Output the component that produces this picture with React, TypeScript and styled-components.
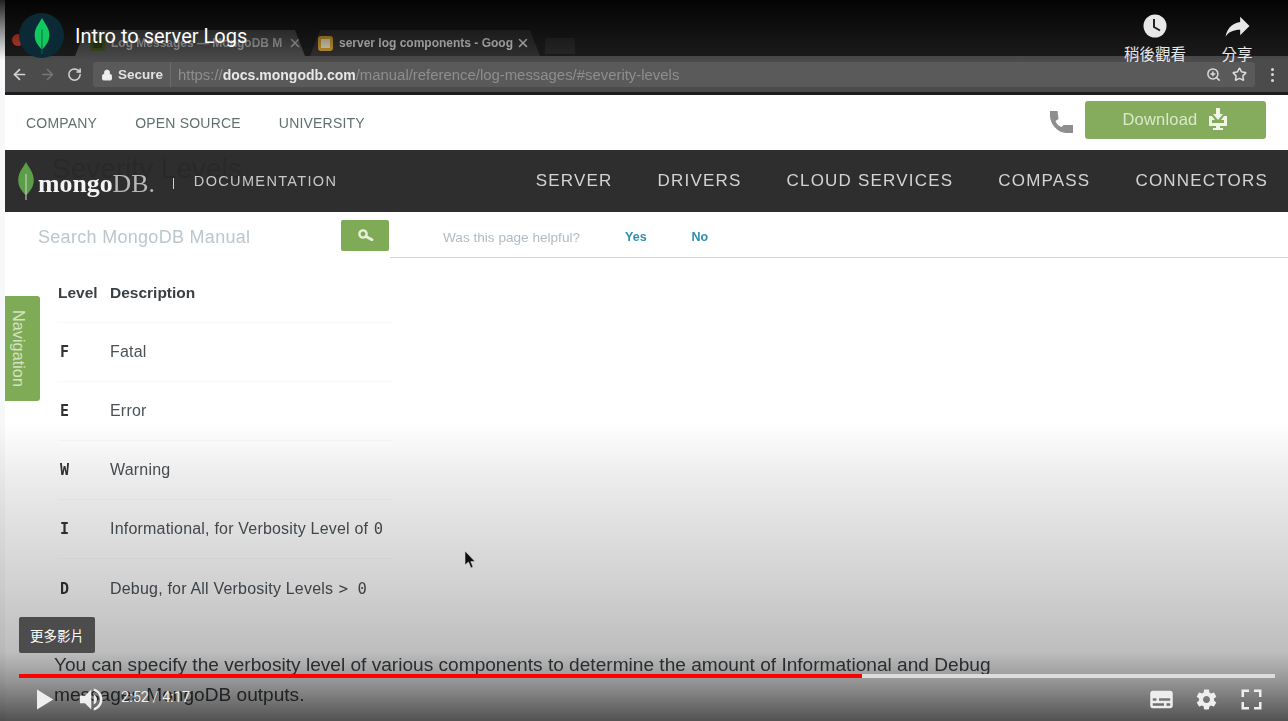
import React from 'react';
import styled, { createGlobalStyle } from 'styled-components';
import { ArrowLeft, ArrowRight, RotateCw, Lock, X, ZoomIn, Star } from 'lucide-react';

const Global = createGlobalStyle`
  html, body { margin: 0; padding: 0; background: #f6f8fa; }
  body { width: 1288px; height: 721px; overflow: hidden; font-family: "Liberation Sans", Arial, sans-serif; }
`;

const Page = styled.div`
  position: relative;
  width: 1288px;
  height: 721px;
  overflow: hidden;
  padding-left: 5px;
  box-sizing: border-box;
  background: #f6f8fa;
`;
const Video = styled.div`
  width: 1283px;
  height: 721px;
  background: #fff;
  display: flex;
  flex-direction: column;
  filter: blur(0.5px);
  overflow: hidden;
`;
const TabStrip = styled.div`
  height: 56px;
  box-sizing: border-box;
  background: #1c1c1d;
  display: flex;
  align-items: flex-end;
  padding-left: 70px;
  gap: 5px;
  position: relative;
`;
const Traffic = styled.span`
  position: absolute;
  left: 7px;
  top: 34px;
  width: 12px;
  height: 12px;
  border-radius: 50%;
  background: #c8402f;
`;
const Tab = styled.div<{ $active?: boolean }>`
  width: 230px;
  height: 26px;
  box-sizing: border-box;
  display: flex;
  align-items: center;
  gap: 6px;
  padding: 0 ${p => (p.$active ? 3 : 10)}px 0 ${p => (p.$active ? 15 : 8)}px;
  background: ${p => (p.$active ? '#4a4a4a' : '#303031')};
  color: ${p => (p.$active ? '#a0a0a0' : '#c8c8c8')};
  font-size: 12px;
  font-weight: 700;
  white-space: nowrap;
  clip-path: polygon(0 100%, 10px 0, calc(100% - 10px) 0, 100% 100%);
`;
const TabTitle = styled.span`
  flex: 1;
  margin-right: -6px;
`;
const Favicon = styled.span<{ $edge: string; $fill: string }>`
  width: 15px;
  height: 15px;
  border-radius: 3px;
  border: 3px solid ${p => p.$edge};
  background: ${p => p.$fill};
  box-sizing: border-box;
  flex: none;
`;
const NewTab = styled.div`
  width: 30px;
  height: 16px;
  background: #28282a;
  align-self: flex-end;
  margin-bottom: 2px;
`;
const AddressRow = styled.div`
  height: 35px;
  background: #4b4b4c;
  border-bottom: 3px solid #1d1d1f;
  display: flex;
  align-items: center;
  padding: 3px 0 0 6px;
  box-sizing: content-box;
  margin-top: -2px;
  color: #d4d4d4;
`;
const NavIcons = styled.div`
  display: flex;
  align-items: center;
  gap: 11px;
  width: 82px;
  flex: none;
`;
const Omnibox = styled.div`
  width: 1162px;
  height: 25px;
  box-sizing: border-box;
  background: #5a5a5b;
  border-radius: 3px;
  display: flex;
  align-items: center;
  padding: 0 8px;
  font-size: 14.9px;
  white-space: nowrap;
`;
const Secure = styled.span`
  display: flex;
  align-items: center;
  gap: 5px;
  padding-right: 7px;
  border-right: 1px solid #6a6a6a;
  margin-right: 7px;
  height: 100%;
  color: #e2e2e2;
  font-size: 13.5px;
  font-weight: 700;
`;
const UrlPart = styled.span<{ $bright?: boolean }>`
  color: ${p => (p.$bright ? '#e8e8e8' : '#8e8e8e')};
  font-weight: ${p => (p.$bright ? 700 : 400)};
  font-size: ${p => (p.$bright ? '14px' : 'inherit')};
`;
const OmniTools = styled.div`
  margin-left: auto;
  display: flex;
  gap: 11px;
  color: #dcdcdc;
`;
const MenuDots = styled.div`
  margin-left: 16px;
  display: flex;
  flex-direction: column;
  gap: 2.5px;
`;
const Dot = styled.span`
  width: 3px;
  height: 3px;
  border-radius: 50%;
  background: #d8d8d8;
`;
const TopBar = styled.div`
  height: 55px;
  box-sizing: border-box;
  background: #fff;
  display: flex;
  align-items: center;
  padding: 0 22px 0 21px;
  gap: 38px;
  color: #62706f;
  font-size: 14px;
  letter-spacing: 0.2px;
`;
const TopRight = styled.div`
  margin-left: auto;
  display: flex;
  align-items: center;
  gap: 11px;
`;
const PhoneIcon = styled.svg`
  width: 24px;
  height: 23px;
  fill: #8e8e90;
  flex: none;
`;
const DownloadBtn = styled.div`
  width: 181px;
  height: 38px;
  box-sizing: border-box;
  background: #84ac5c;
  border-radius: 3px;
  color: #dbe8cc;
  display: flex;
  align-items: center;
  justify-content: center;
  gap: 11px;
  font-size: 16.5px;
  margin-top: -6px;
`;
const DocNav = styled.div`
  height: 62px;
  box-sizing: border-box;
  background: #2e2e2e;
  display: flex;
  align-items: center;
  padding: 0 20px 0 12px;
  position: relative;
`;
const Ghost = styled.div`
  position: absolute;
  left: 47px;
  top: 3px;
  font-size: 28px;
  color: #292929;
`;
const LeafIcon = styled.svg`
  flex: none;
`;
const LogoWord = styled.span`
  font-family: "Liberation Serif", serif;
  font-size: 25.8px;
  color: #f4f4f4;
  font-weight: 700;
  margin: 6px 0 0 3px;
  position: relative;
`;
const LogoLight = styled.span`
  font-weight: 400;
  color: #b8b8b8;
`;
const Pipe = styled.span`
  width: 1px;
  height: 12px;
  background: #d0d0d0;
  margin: 4px 20px 0 18px;
`;
const DocLabel = styled.span`
  color: #c8c8c8;
  font-size: 14.5px;
  letter-spacing: 1.35px;
  position: relative;
`;
const MainLinks = styled.div`
  margin-left: auto;
  display: flex;
  gap: 45px;
  color: #d4d4d4;
  font-size: 17px;
  letter-spacing: 1.2px;
`;
const Body = styled.div`
  display: grid;
  grid-template-columns: 385px 1fr;
  flex: 1;
  color: #4a4f54;
  position: relative;
`;
const Side = styled.div`
  display: flex;
  flex-direction: column;
`;
const SearchRow = styled.div`
  height: 46px;
  box-sizing: border-box;
  display: flex;
  align-items: center;
  padding: 0 1px 0 33px;
  color: #bcc6cd;
  font-size: 18px;
  letter-spacing: 0.3px;
  margin-bottom: 6px;
`;
const SearchLabel = styled.span`
  padding-top: 4px;
`;
const SearchBtn = styled.div`
  margin-left: auto;
  width: 48px;
  height: 31px;
  background: #7fab56;
  color: #e6f0da;
  border-radius: 2px;
  display: flex;
  align-items: center;
  justify-content: center;
`;
const Helpful = styled.div`
  height: 46px;
  box-sizing: border-box;
  border-bottom: 1px solid #cdd6dc;
  display: flex;
  align-items: center;
  padding: 5px 0 0 53px;
  font-size: 13.6px;
  color: #b0bbc2;
  gap: 45px;
`;
const HelpLink = styled.span`
  color: #2f8fb0;
  font-weight: 700;
  font-size: 12.5px;
`;
const Row = styled.div`
  height: 59px;
  box-sizing: border-box;
  margin-left: 53px;
  margin-right: -2px;
  display: flex;
  align-items: center;
  font-size: 16px;
  letter-spacing: 0.2px;
  color: #4a5157;
  &:not(:last-child) { border-bottom: 1px solid #f6f9fb; }
`;
const Level = styled.span`
  width: 50px;
  flex: none;
  font-family: "DejaVu Sans Mono", monospace;
  font-weight: 700;
  font-size: 15px;
  color: #333;
  margin-left: 2px;
`;
const Code = styled.span`
  font-family: "DejaVu Sans Mono", monospace;
  font-size: 15.5px;
  letter-spacing: 0;
  margin-left: 1px;
`;
const Head = styled.span<{ $w?: number }>`
  width: ${p => (p.$w ? `${p.$w}px` : 'auto')};
  font-size: 15.5px;
  font-weight: 700;
  color: #3a3f44;
  letter-spacing: 0;
`;
const Para = styled.p`
  position: absolute;
  left: 49px;
  top: 438px;
  width: 1000px;
  margin: 0;
  font-size: 19.1px;
  line-height: 30px;
  color: #3f4448;
`;
const NavTab = styled.div`
  position: absolute;
  left: 5px;
  top: 296px;
  width: 35px;
  height: 105px;
  box-sizing: border-box;
  padding-right: 8px;
  background: #7fab56;
  border-radius: 0 3px 3px 0;
  color: #d3e2c2;
  writing-mode: vertical-rl;
  font-size: 16.3px;
  display: flex;
  align-items: center;
  justify-content: center;
`;
const Mouse = styled.svg`
  position: absolute;
  left: 464px;
  top: 551px;
`;
const TopShade = styled.div`
  position: absolute;
  left: 0;
  top: 0;
  width: 100%;
  height: 60px;
  background: linear-gradient(#000d, #0000);
  pointer-events: none;
`;
const BottomShade = styled.div`
  position: absolute;
  left: 0;
  bottom: 0;
  width: 100%;
  height: 300px;
  background: linear-gradient(#00000000 0%, #00000014 20%, #00000030 57%, #00000042 77%, #0000006b 87%, #000000ad 100%);
  pointer-events: none;
`;
const ChannelLogo = styled.div`
  position: absolute;
  left: 19px;
  top: 13px;
  width: 45px;
  height: 45px;
  border-radius: 50%;
  background: #0b2a35;
  display: flex;
  align-items: center;
  justify-content: center;
`;
const Title = styled.div`
  position: absolute;
  left: 75px;
  top: 25px;
  color: #fff;
  font-family: Roboto, sans-serif;
  font-size: 20px;
  line-height: 22px;
  white-space: nowrap;
`;
const TopAction = styled.div<{ $x: number }>`
  position: absolute;
  top: 14px;
  left: ${p => p.$x}px;
  width: 100px;
  display: flex;
  flex-direction: column;
  align-items: center;
  color: #e8e8e8;
  font-family: Roboto, "Noto Sans CJK TC", sans-serif;
  font-size: 15.5px;
  gap: 7px;
  line-height: 20px;
`;
const Tooltip = styled.div`
  position: absolute;
  left: 19px;
  top: 617px;
  width: 76px;
  height: 36px;
  background: #4c4c4c;
  border-radius: 2px;
  color: #fff;
  font-family: Roboto, "Noto Sans CJK TC", sans-serif;
  font-size: 13.5px;
  display: flex;
  align-items: center;
  justify-content: center;
`;
const Progress = styled.div`
  position: absolute;
  left: 19px;
  top: 674px;
  width: 1256px;
  height: 4px;
  background: #dcdcdc;
`;
const Played = styled.div`
  height: 100%;
  background: #f00;
`;
const Controls = styled.div`
  position: absolute;
  left: 0;
  top: 678px;
  width: 1288px;
  height: 43px;
  padding-left: 22px;
  box-sizing: border-box;
  display: flex;
  align-items: center;
  color: #eee;
`;
const CtrlIcon = styled.svg<{ $shift?: number }>`
  width: 45px;
  height: 45px;
  fill: #eee;
  flex: none;
  margin-left: ${p => p.$shift ?? 0}px;
`;
const Time = styled.span`
  font-family: Roboto, sans-serif;
  font-size: 14.5px;
  margin: 0 0 4px 6px;
`;
const CtrlRight = styled.div`
  margin-left: auto;
  margin-right: 14px;
  display: flex;
`;

const levels: [string, React.ReactNode][] = [
  ['F', 'Fatal'],
  ['E', 'Error'],
  ['W', 'Warning'],
  ['I', <>Informational, for Verbosity Level of <Code>0</Code></>],
  ['D', <>Debug, for All Verbosity Levels <Code>&gt; 0</Code></>],
];

const playedSeconds = 2 * 60 + 52.5;
const totalSeconds = 4 * 60 + 17;

const Leaf = ({ w, h, c, stem }: { w: number; h: number; c: string; stem: string }) => (
  <LeafIcon width={w} height={h} viewBox="0 0 20 44">
    <path d="M10 0C13 6 19 12 19 21C19 30 13 35 10.6 38L9.4 38C7 35 1 30 1 21C1 12 7 6 10 0Z" fill={c} />
    <path d="M10 14V44" stroke={stem} strokeWidth="1.2" />
  </LeafIcon>
);

export default function App() {
  return (
    <Page>
      <Global />
      <Video>
        <TabStrip>
          <Traffic />
          <Tab $active>
            <Favicon $edge="#3a4a20" $fill="#2a3a18" />
            <TabTitle>Log Messages — MongoDB M</TabTitle>
            <X size={14} strokeWidth={2.6} />
          </Tab>
          <Tab>
            <Favicon $edge="#c8962f" $fill="#e0d4b8" />
            <TabTitle>server log components - Goog</TabTitle>
            <X size={14} strokeWidth={2.6} />
          </Tab>
          <NewTab />
        </TabStrip>
        <AddressRow>
          <NavIcons>
            <ArrowLeft size={17} strokeWidth={2.4} />
            <ArrowRight size={17} strokeWidth={2} color="#777" />
            <RotateCw size={15} strokeWidth={2.4} />
          </NavIcons>
          <Omnibox>
            <Secure>
              <Lock size={12} fill="#eee" strokeWidth={2} />
              Secure
            </Secure>
            <UrlPart>https://</UrlPart>
            <UrlPart $bright>docs.mongodb.com</UrlPart>
            <UrlPart>/manual/reference/log-messages/#severity-levels</UrlPart>
            <OmniTools>
              <ZoomIn size={15} strokeWidth={2.4} />
              <Star size={15} strokeWidth={2.4} />
            </OmniTools>
          </Omnibox>
          <MenuDots>
            <Dot />
            <Dot />
            <Dot />
          </MenuDots>
        </AddressRow>
        <TopBar>
          <span>COMPANY</span>
          <span>OPEN SOURCE</span>
          <span>UNIVERSITY</span>
          <TopRight>
            <PhoneIcon viewBox="0 0 24 23">
              <path d="M0 0h7.5l1 8-3 2c1 3 3 5 6 6l2-2h9.5v8h-7C8 22 0 13 0 5z" />
            </PhoneIcon>
            <DownloadBtn>
              Download
              <svg width="20" height="24" viewBox="0 0 20 24" fill="#f0f5e8">
                <path d="M8 0h4v6h3l-5 6-5-6h3z" />
                <path d="M1 8h3l3 4H4v3h12v-3h-3l3-4h3v10H12v2h3v2H5v-2h3v-2H1z" />
              </svg>
            </DownloadBtn>
          </TopRight>
        </TopBar>
        <DocNav>
          <Ghost>Severity Levels</Ghost>
          <Leaf w={18} h={38} c="#5c9e48" stem="#d0d0d0" />
          <LogoWord>
            mongo<LogoLight>DB.</LogoLight>
          </LogoWord>
          <Pipe />
          <DocLabel>DOCUMENTATION</DocLabel>
          <MainLinks>
            <span>SERVER</span>
            <span>DRIVERS</span>
            <span>CLOUD SERVICES</span>
            <span>COMPASS</span>
            <span>CONNECTORS</span>
          </MainLinks>
        </DocNav>
        <Body>
          <Side>
            <SearchRow>
              <SearchLabel>Search MongoDB Manual</SearchLabel>
              <SearchBtn>
                <svg width="17" height="12" viewBox="0 0 17 12" fill="none" stroke="currentColor" strokeWidth="2.4">
                  <circle cx="6" cy="5" r="3.6" />
                  <path d="M9 7.5l6 3.2" strokeLinecap="round" strokeWidth="2.8" />
                </svg>
              </SearchBtn>
            </SearchRow>
            <Row>
              <Head $w={52}>Level</Head>
              <Head>Description</Head>
            </Row>
            {levels.map(([l, d]) => (
              <Row key={l}>
                <Level>{l}</Level>
                <span>{d}</span>
              </Row>
            ))}
          </Side>
          <Helpful>
            Was this page helpful?
            <HelpLink>Yes</HelpLink>
            <HelpLink>No</HelpLink>
          </Helpful>
          <Para>
            You can specify the verbosity level of various components to determine the amount of Informational and Debug
            <br />
            messages MongoDB outputs.
          </Para>
        </Body>
      </Video>
      <NavTab>Navigation</NavTab>
      <Mouse width="12" height="18" viewBox="0 0 12 18">
        <path d="M1 0V14L4.5 11L7 17L9 16L6.8 10.5H11Z" fill="#111" stroke="#fff" strokeWidth="0.6" />
      </Mouse>
      <TopShade />
      <BottomShade />
      <ChannelLogo>
        <Leaf w={18} h={36} c="#12c95f" stem="#0a6a35" />
      </ChannelLogo>
      <Title>Intro to server Logs</Title>
      <TopAction $x={1105}>
        <svg width="24" height="24" viewBox="0 0 24 24">
          <circle cx="12" cy="12" r="11.5" fill="#e8e8e8" />
          <path d="M11 5v8l6 3.5" fill="none" stroke="#222" strokeWidth="2" />
        </svg>
        稍後觀看
      </TopAction>
      <TopAction $x={1187}>
        <svg width="25" height="24" viewBox="3 3 18 18" fill="#e8e8e8">
          <path d="M14 9V5l7 7-7 7v-4.1c-5 0-8.5 1.6-11 5.1 1-5 4-10 11-11z" />
        </svg>
        分享
      </TopAction>
      <Tooltip>更多影片</Tooltip>
      <Progress>
        <Played style={{ width: `${(playedSeconds / totalSeconds) * 100}%` }} />
      </Progress>
      <Controls>
        <CtrlIcon viewBox="0 0 36 36">
          <path d="M12 26l6.5-4v-8L12 10zM18.5 22l6.5-4-6.5-4z" />
        </CtrlIcon>
        <CtrlIcon viewBox="0 0 36 36" $shift={3}>
          <path d="M8,21 L12,21 L17,26 L17,10 L12,15 L8,15 L8,21 Z" />
          <path d="M19,14 L19,22 C20.48,21.32 21.5,19.77 21.5,18 C21.5,16.26 20.48,14.74 19,14 Z" />
          <path d="M19,11.29 C21.89,12.15 24,14.83 24,18 C24,21.17 21.89,23.85 19,24.71 L19,26.77 C23.01,25.86 26,22.28 26,18 C26,13.72 23.01,10.14 19,9.23 L19,11.29 Z" />
        </CtrlIcon>
        <Time>2:52 / 4:17</Time>
        <CtrlRight>
          <CtrlIcon viewBox="0 0 36 36">
            <path d="M11,11 C9.89,11 9,11.9 9,13 L9,23 C9,24.1 9.89,25 11,25 L25,25 C26.1,25 27,24.1 27,23 L27,13 C27,11.9 26.1,11 25,11 L11,11 Z M11,17 L14,17 L14,19 L11,19 L11,17 Z M20,23 L11,23 L11,21 L20,21 L20,23 Z M25,23 L22,23 L22,21 L25,21 L25,23 Z M25,19 L16,19 L16,17 L25,17 L25,19 Z" />
          </CtrlIcon>
          <CtrlIcon viewBox="0 0 36 36">
            <path d="m 23.94,18.78 c .03,-0.25 .05,-0.51 .05,-0.78 0,-0.27 -0.02,-0.52 -0.05,-0.78 l 1.68,-1.32 c .15,-0.12 .19,-0.33 .09,-0.51 l -1.6,-2.76 c -0.09,-0.17 -0.31,-0.24 -0.48,-0.17 l -1.99,.8 c -0.41,-0.32 -0.86,-0.58 -1.35,-0.78 l -0.30,-2.12 c -0.02,-0.19 -0.19,-0.33 -0.39,-0.33 l -3.2,0 c -0.2,0 -0.36,.14 -0.39,.33 l -0.30,2.12 c -0.48,.2 -0.93,.47 -1.35,.78 l -1.99,-0.8 c -0.18,-0.07 -0.39,0 -0.48,.17 l -1.6,2.76 c -0.10,.17 -0.05,.39 .09,.51 l 1.68,1.32 c -0.03,.25 -0.05,.52 -0.05,.78 0,.26 .02,.52 .05,.78 l -1.68,1.32 c -0.15,.12 -0.19,.33 -0.09,.51 l 1.6,2.76 c .09,.17 .31,.24 .48,.17 l 1.99,-0.8 c .41,.32 .86,.58 1.35,.78 l .30,2.12 c .02,.19 .19,.33 .39,.33 l 3.2,0 c .2,0 .36,-0.14 .39,-0.33 l .30,-2.12 c .48,-0.2 .93,-0.47 1.35,-0.78 l 1.99,.8 c .18,.07 .39,0 .48,-0.17 l 1.6,-2.76 c .09,-0.17 .05,-0.39 -0.09,-0.51 l -1.68,-1.32 0,0 z m -5.94,2.01 c -1.54,0 -2.8,-1.25 -2.8,-2.8 0,-1.54 1.25,-2.8 2.8,-2.8 1.54,0 2.8,1.25 2.8,2.8 0,1.54 -1.25,2.8 -2.8,2.8 l 0,0 z" />
          </CtrlIcon>
          <CtrlIcon viewBox="0 0 36 36">
            <path d="m 10,16 2,0 0,-4 4,0 0,-2 L 10,10 l 0,6 0,0 z" />
            <path d="m 20,10 0,2 4,0 0,4 2,0 L 26,10 l -6,0 0,0 z" />
            <path d="m 24,24 -4,0 0,2 L 26,26 l 0,-6 -2,0 0,4 0,0 z" />
            <path d="M 12,20 10,20 10,26 l 6,0 0,-2 -4,0 0,-4 0,0 z" />
          </CtrlIcon>
        </CtrlRight>
      </Controls>
    </Page>
  );
}
